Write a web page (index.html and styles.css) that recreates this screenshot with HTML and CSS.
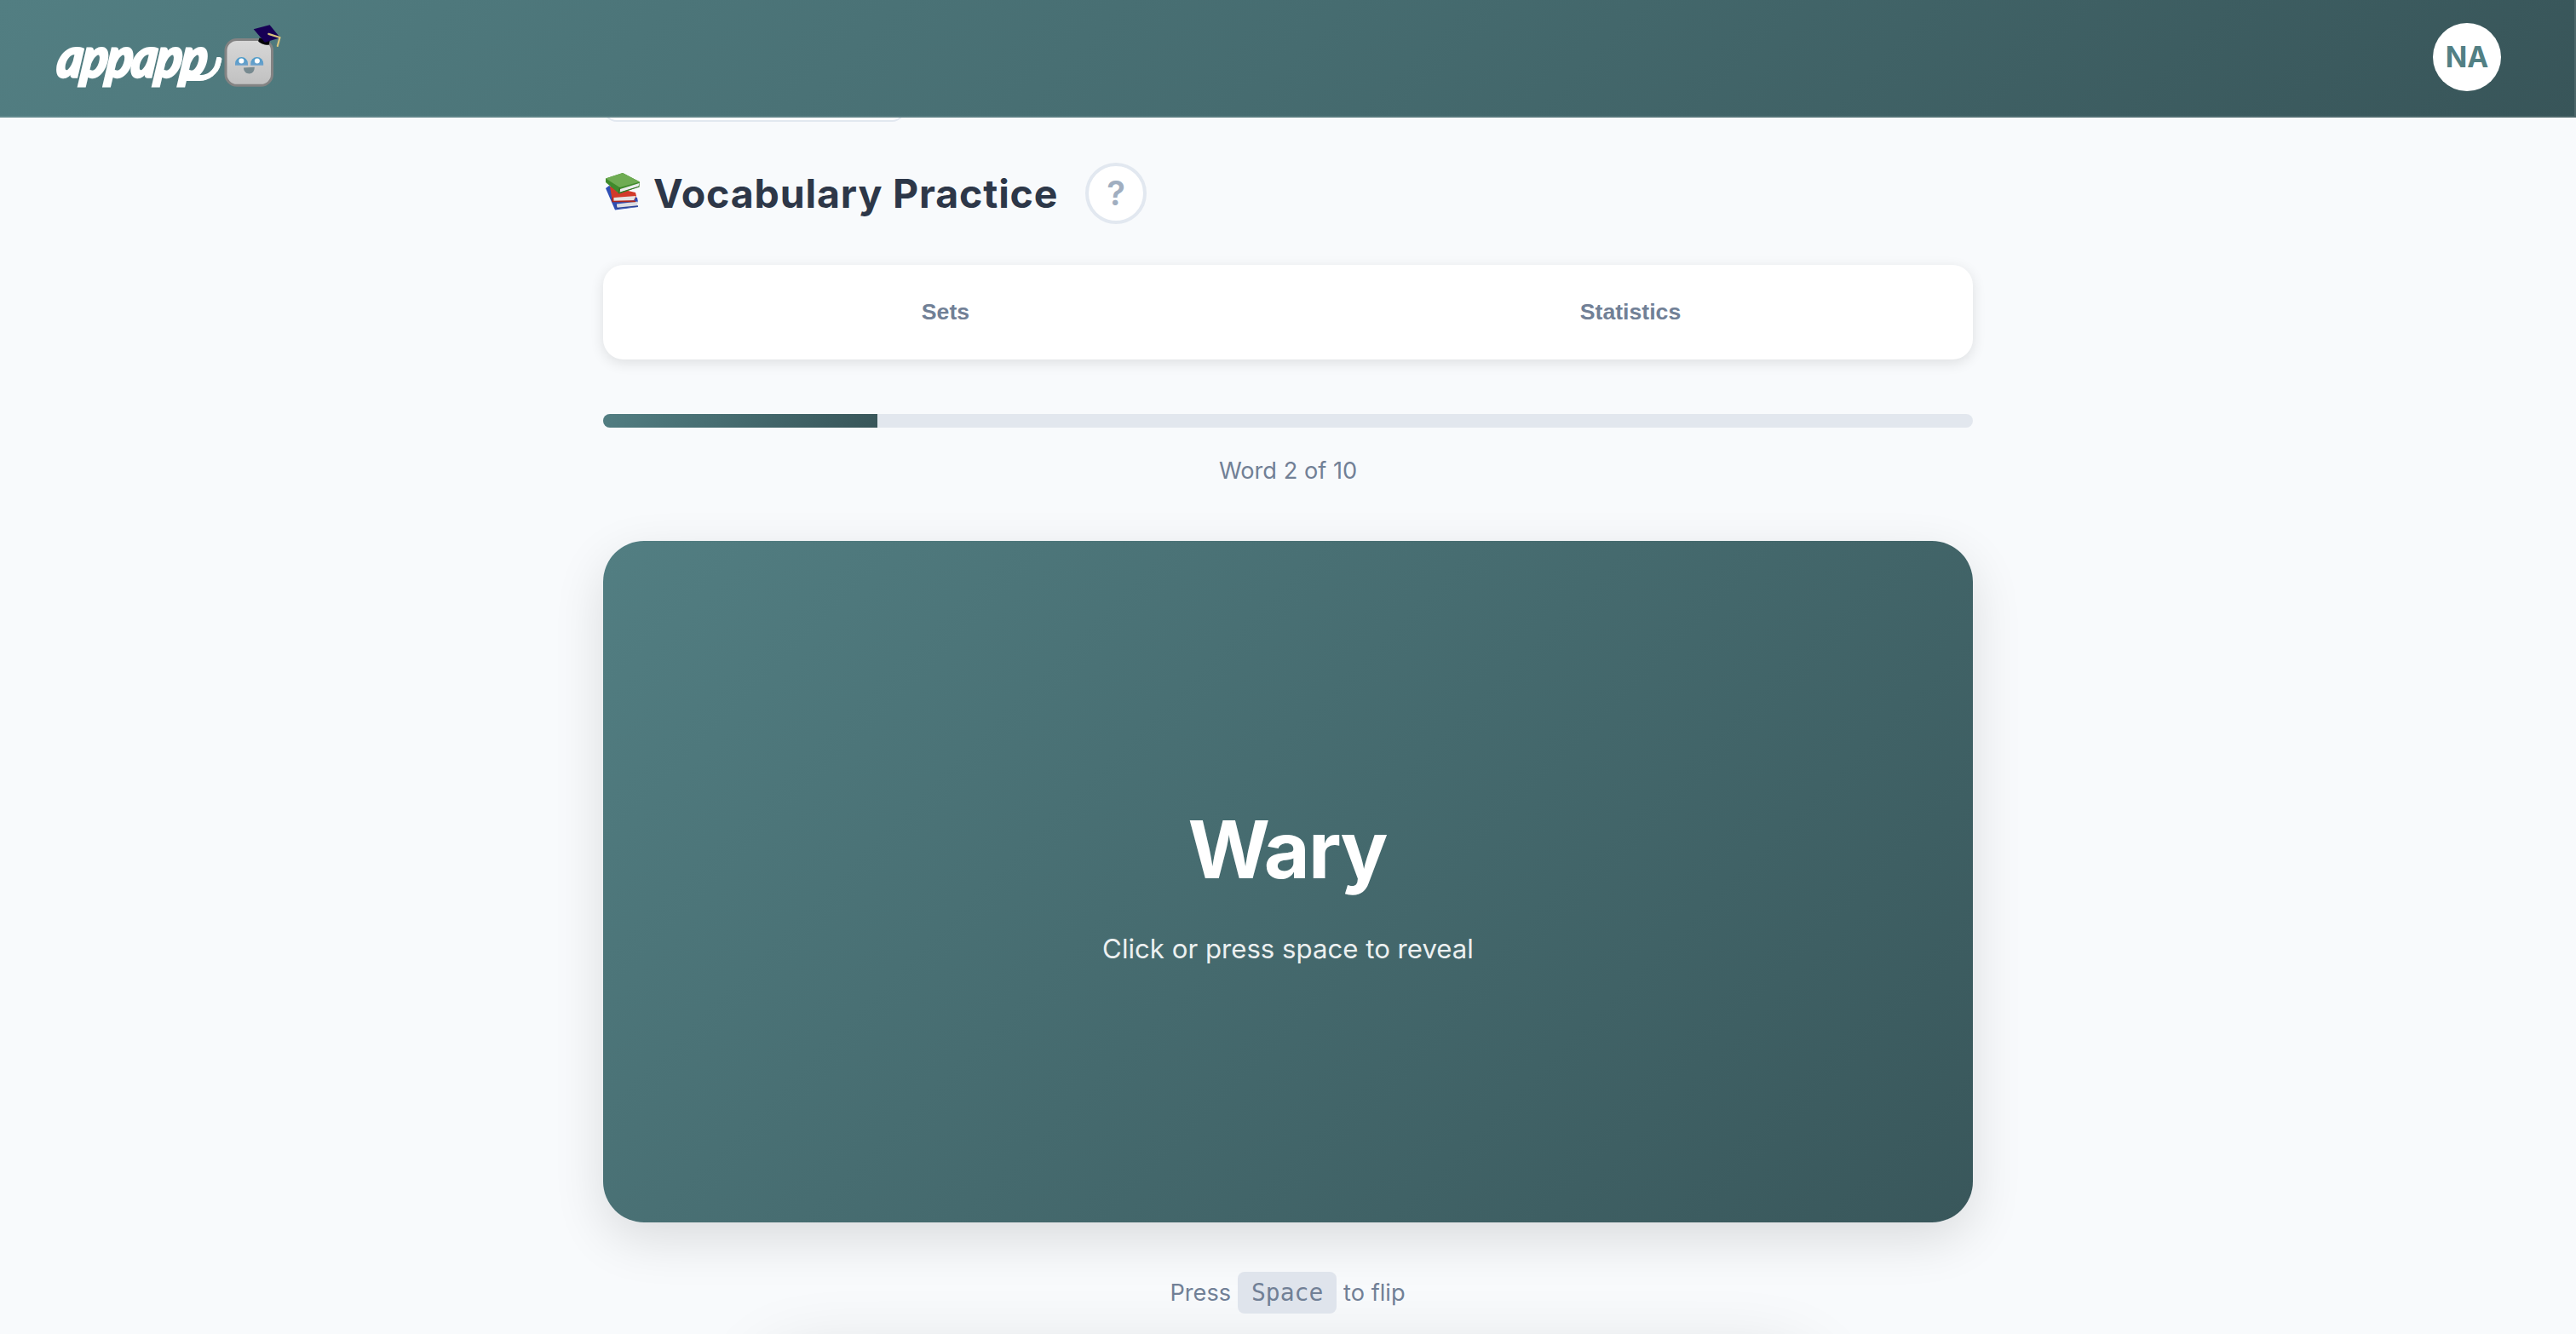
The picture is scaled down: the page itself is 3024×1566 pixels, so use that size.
FILE: index.html
```html
<!DOCTYPE html>
<html lang="en">
<head>
<meta charset="utf-8">
<title>Vocabulary Practice</title>
<link rel="stylesheet" href="styles.css">
</head>
<body>
<header class="topbar">
  <div class="brand">
    <div class="logo"><span class="wordmark">appapp</span></div>
    <svg class="robot" width="72" height="80" viewBox="260 26 72 80" aria-hidden="true">
      <defs>
        <linearGradient id="face" x1="0" y1="0" x2="0" y2="1"><stop offset="0" stop-color="#d8d8d8"/><stop offset="1" stop-color="#c0c0c0"/></linearGradient>
        <linearGradient id="eye" x1="0" y1="0" x2="0" y2="1"><stop offset="0" stop-color="#4b9ac8"/><stop offset="1" stop-color="#6ba1cc"/></linearGradient>
      </defs>
      <rect x="265" y="46.5" width="54.5" height="53.8" rx="13" fill="url(#face)" stroke="#838383" stroke-width="3"/>
      <path d="M276 76.700v-2a7.500 7.700 0 0 1 15 0v2z" fill="url(#eye)"/>
      <path d="M294.200 76.700v-2a7.500 7.700 0 0 1 15 0v2z" fill="url(#eye)"/>
      <circle cx="283.4" cy="71.4" r="3" fill="#fff"/>
      <circle cx="301.9" cy="71.4" r="3" fill="#fff"/>
      <path d="M286 79.600l12.800-.8c0 4.800-2.400 7.700-6.200 7.700s-6.600-2.500-6.600-6.900z" fill="#778a90"/>
      <path d="M304.600 44.500l-1.500 3.800c2 2.900 8 5 12.600 4.500l1-5z" fill="#050508"/>
      <path d="M297.700 34.200l18.900-4.900 12.300 14.900-18 5.600z" fill="#170055"/>
      <path d="M315.300 39.900l13.200 4.100-2.700 10" fill="none" stroke="#d9c47c" stroke-width="2.200" stroke-linecap="round" stroke-linejoin="round"/>
    </svg>
  </div>
  <div class="avatar">NA</div>
</header>
<main class="page">
  <div class="back"></div>
  <div class="title-row">
    <svg class="books" width="44" height="46" viewBox="0 0 44 46" aria-hidden="true">
      <path d="M1 19l4-3 33 14 1 5-3 2 3 4-27 3.500z" fill="#2f4fb5"/>
      <path d="M14 37.500l25-3-1.500 6.500-24 2z" fill="#dcdde2"/>
      <path d="M13 38l1 4.500 25-2.500" fill="none" stroke="#294399" stroke-width="1.400"/>
      <path d="M6 17l30 7 1 4-2.500 5.500-25.500 1z" fill="#d23a2a"/>
      <path d="M10.500 30l26-2-2.500 5-23.500 1z" fill="#e6e5e4"/>
      <path d="M9 29.500v5h27" fill="none" stroke="#ad261c" stroke-width="1.400"/>
      <path d="M1 7.500l20-6.500 20 10.500-.5 5.500-23.500 8.500L1 12z" fill="#3f8a2c"/>
      <path d="M1 7.500l20-6.500 20 10.500-23.500 6.500z" fill="#6fac53"/>
      <path d="M18 20l22.500-7-1 4-22 7z" fill="#ecedee"/>
      <path d="M17.500 18l-1 6.500 24-7.500" fill="none" stroke="#347524" stroke-width="1.300"/>
    </svg>
    <h1 class="title">Vocabulary Practice</h1>
    <button class="help">?</button>
  </div>
  <nav class="tabs"><button class="tab">Sets</button><button class="tab">Statistics</button></nav>
  <div class="progress"><div class="progress-fill" style="width:20%"></div></div>
  <p class="counter">Word 2 of 10</p>
  <section class="card">
    <div class="word">Wary</div>
    <div class="hint">Click or press space to reveal</div>
  </section>
  <p class="keys"><span>Press</span><kbd class="key">Space</kbd><span>to flip</span></p>
  <div class="next-panel"></div>
</main>
</body>
</html>
```
FILE: styles.css
```css
* { box-sizing: border-box; }
body {
  margin: 0;
  height: 1566px;
  overflow: hidden;
  background: #f8fafc;
  font-family: Inter, "Liberation Sans", sans-serif;
  color: #718096;
}
button { border: 0; padding: 0; }
.topbar {
  position: relative;
  z-index: 2;
  height: 138px;
  display: flex;
  justify-content: space-between;
  padding: 26px 86px 0 64px;
  border: solid rgba(255, 255, 255, 0.1);
  border-width: 0 2px 2px 0;
  background: linear-gradient(135deg, #527e82 0%, #466c70 50%, #385559 100%) border-box;
}
.brand { display: flex; align-items: flex-start; }
.logo { position: relative; width: 196px; height: 80px; }
/* swash that trails off the last letter */
.logo::after {
  content: "";
  position: absolute;
  left: 157px;
  top: 41px;
  width: 30px;
  height: 21px;
  border: solid #fff;
  border-width: 0 7px 7px 0;
  border-radius: 0 4px 20px 0;
  transform: skewX(-14deg);
}
.wordmark {
  display: block;
  line-height: 80px;
  font-family: Lato, sans-serif;
  font-style: italic;
  font-weight: 700;
  font-size: 64px;
  letter-spacing: -1.500px;
  color: #fff;
  -webkit-text-stroke: 3.500px #fff;
  transform: translateX(2px) scaleX(0.89) skewX(-8deg);
  transform-origin: 0 61px;
  white-space: nowrap;
}
.robot { display: block; }
.avatar {
  width: 80px;
  height: 80px;
  margin-top: 1px;
  border-radius: 50%;
  background: #fff;
  color: #528084;
  font-size: 33.500px;
  font-weight: 700;
  line-height: 80px;
  text-align: center;
}
.page { width: 1608px; margin: 0 auto; }
.back {
  width: 355px;
  height: 76px;
  margin-top: -71px;
  border: 2px solid #e2e8f0;
  border-radius: 16px;
  background: #fff;
}
.title-row { display: flex; align-items: center; height: 72px; margin-top: 48px; }
.books { margin: -4px 0 0 2px; }
.title {
  width: 480px;
  margin: 0 27px 0 13px;
  color: #2d3748;
  font-size: 46.500px;
  font-weight: 700;
  line-height: 72px;
  letter-spacing: 0.850px;
  white-space: nowrap;
}
.help {
  width: 72px;
  height: 72px;
  border: 4px solid #e2e8f0;
  border-radius: 50%;
  background: #fff;
  color: #a0aec0;
  font: 600 40px/62px Inter, sans-serif;
}
.tabs {
  display: grid;
  grid-template-columns: 1fr 1fr;
  height: 111px;
  margin-top: 48px;
  border-radius: 24px;
  background: #fff;
  box-shadow: 0 4px 16px rgba(0, 0, 0, 0.11);
}
.tab { background: none; color: #718096; font: 700 26.667px "Liberation Sans", sans-serif; }
.progress { height: 16px; margin-top: 64px; border-radius: 8px; background: #e2e7ee; overflow: hidden; }
.progress-fill { height: 100%; background: linear-gradient(135deg, #527e82 0%, #456a6e 50%, #385559 100%); }
.counter { margin: 31px 0 0; height: 40px; font-size: 27.200px; line-height: 40px; text-align: center; }
.card {
  display: flex;
  flex-direction: column;
  align-items: center;
  height: 800px;
  margin-top: 62px;
  padding-top: 304px;
  border-radius: 48px;
  background: linear-gradient(135deg, #527e82 0%, #456a6e 50%, #39575b 100%);
  box-shadow: 0 20px 60px rgba(0, 0, 0, 0.12);
  color: #fff;
}
.word { margin-right: 2px; font-size: 93px; font-weight: 700; line-height: 117px; letter-spacing: -1.800px; }
.hint { margin-top: 37px; font-size: 31.200px; line-height: 42px; opacity: 0.9; }
.keys {
  display: flex;
  justify-content: center;
  height: 49px;
  margin: 58px 1px 0 0;
  font-size: 27.200px;
  line-height: 50px;
}
.key {
  width: 116px;
  height: 49px;
  margin: 0 8px;
  border-radius: 8px;
  background: #dfe4ec;
  font: 28px/50px "DejaVu Sans Mono", monospace;
  text-align: center;
}
.next-panel {
  height: 160px;
  margin: 58px 192px 0;
  border-radius: 40px;
  box-shadow: 0 0 90px rgba(0, 0, 0, 0.16);
}
```
